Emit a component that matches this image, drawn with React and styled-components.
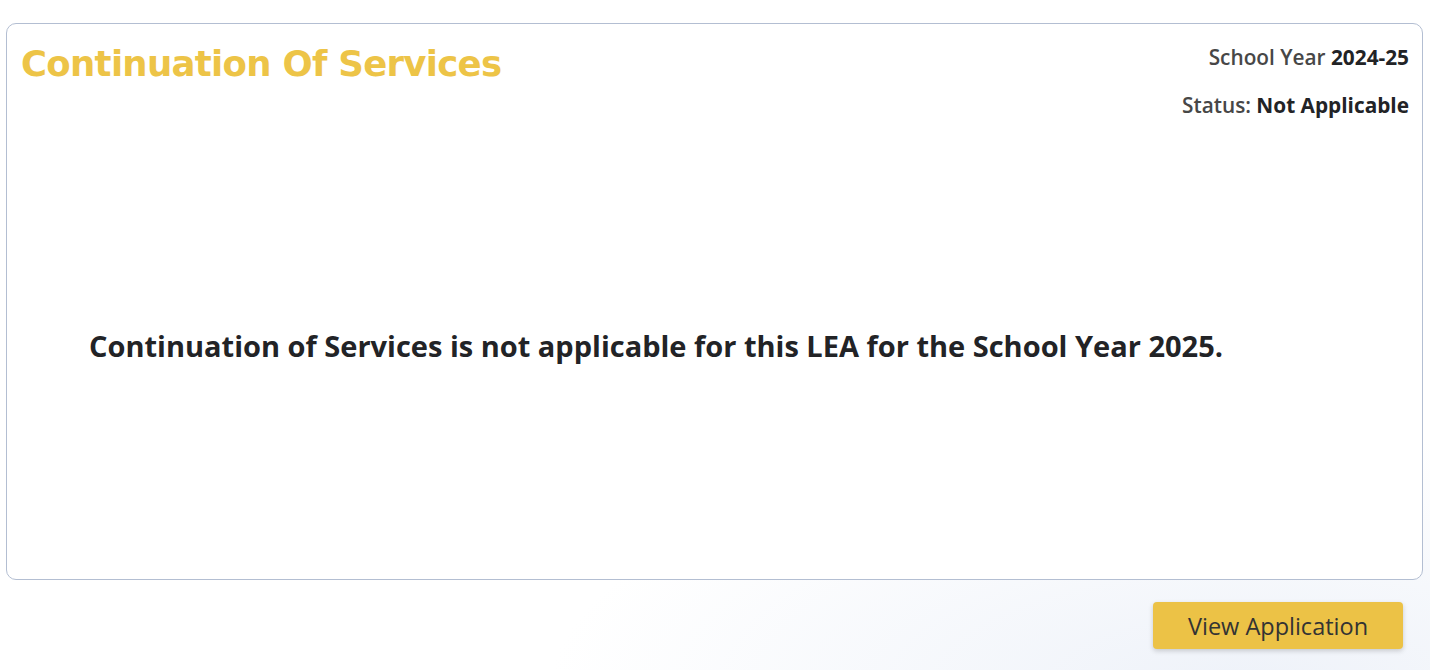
import React from "react";
import styled, { createGlobalStyle } from "styled-components";

const GlobalStyle = createGlobalStyle`
  html, body {
    margin: 0;
    padding: 0;
    background: #ffffff;
  }
  body {
    font-family: "Open Sans", "Noto Sans", sans-serif;
  }
`;

const Page = styled.div`
  height: 670px;
  box-sizing: border-box;
  padding: 23px 7px 0 6px;
  background:
    radial-gradient(ellipse 700px 260px at 1250px 690px, #eef2f9 0%, rgba(238, 242, 249, 0) 100%),
    linear-gradient(180deg, #ffffff 0%, #ffffff 100%);
  display: flex;
  flex-direction: column;
`;

const Card = styled.section`
  height: 557px;
  box-sizing: border-box;
  border: 1.5px solid #b3bed2;
  border-radius: 10px;
  background: #ffffff;
  display: flex;
  flex-direction: column;
`;

const CardHeader = styled.header`
  display: flex;
  justify-content: space-between;
  align-items: flex-start;
  padding: 16px 13px 0 14px;
`;

const Title = styled.h1`
  margin: 0;
  font-family: "DejaVu Sans", sans-serif;
  font-weight: bold;
  font-size: 35.5px;
  line-height: 48px;
  letter-spacing: -0.7px;
  color: #edc447;
`;

const Meta = styled.div`
  display: flex;
  flex-direction: column;
  align-items: flex-end;
  gap: 20px;
  padding-top: 3px;
`;

const MetaLine = styled.div`
  font-family: "Open Sans", sans-serif;
  font-size: 20.8px;
  line-height: 28px;
  font-weight: 600;
  color: #474747;
  b {
    color: #222326;
    font-weight: 700;
  }
`;

const CardBody = styled.div`
  flex: 1;
  display: flex;
  align-items: center;
  padding: 0 0 8px 82px;
`;

const Message = styled.p`
  margin: 0;
  font-family: "Open Sans", sans-serif;
  font-size: 29px;
  font-weight: 700;
  color: #222326;
`;

const Footer = styled.div`
  display: flex;
  justify-content: flex-end;
  padding: 22px 20px 0 0;
`;

const Button = styled.button`
  width: 250px;
  height: 47px;
  border: none;
  border-radius: 4px;
  background: #ecc246;
  box-shadow: 0 2px 5px rgba(0, 0, 0, 0.18);
  font-family: "Open Sans", sans-serif;
  font-size: 23.5px;
  color: #333333;
  cursor: pointer;
`;

export default function App() {
  return (
    <>
      <GlobalStyle />
      <Page>
        <Card>
          <CardHeader>
            <Title>Continuation Of Services</Title>
            <Meta>
              <MetaLine>
                School Year <b>2024-25</b>
              </MetaLine>
              <MetaLine>
                Status: <b>Not Applicable</b>
              </MetaLine>
            </Meta>
          </CardHeader>
          <CardBody>
            <Message>
              Continuation of Services is not applicable for this LEA for the School Year 2025.
            </Message>
          </CardBody>
        </Card>
        <Footer>
          <Button>View Application</Button>
        </Footer>
      </Page>
    </>
  );
}
